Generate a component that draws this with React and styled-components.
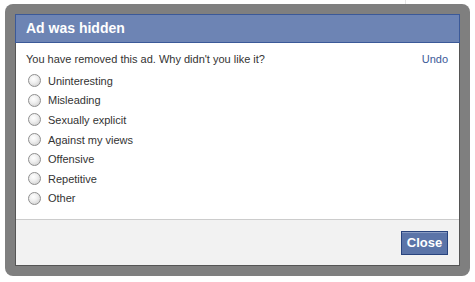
import React from 'react';
import styled, { createGlobalStyle } from 'styled-components';

const GlobalStyle = createGlobalStyle`
  body {
    margin: 0;
    background: #fff linear-gradient(#e5e5e5, #e5e5e5) no-repeat 405px 0 / 1px 100%;
    font-family: "Liberation Sans", Arial, sans-serif;
  }
`;

const Frame = styled.div`
  box-sizing: border-box;
  width: 465px;
  height: 272px;
  margin: 4px 0 0 5px;
  padding: 10px;
  border-radius: 8px;
  background: #7f7f7f;
`;

const Dialog = styled.div`
  box-sizing: border-box;
  height: 100%;
  display: flex;
  flex-direction: column;
  background: #fff;
  border: 1px solid #555;
  border-top: none;
`;

const Header = styled.div`
  height: 27px;
  line-height: 27px;
  padding-left: 10px;
  background: #6d84b4;
  border: 1px solid #3b5998;
  margin: 0 -1px;
  color: #fff;
  font-size: 14px;
  font-weight: bold;
`;

const Body = styled.div`
  flex: 1;
  padding: 9px 10px 0 10px;
  font-size: 11px;
  color: #333;
`;

const Prompt = styled.div`
  display: flex;
  justify-content: space-between;
  line-height: 14px;
  margin-bottom: 5px;
`;

const Undo = styled.a`
  color: #3b5998;
  cursor: pointer;
  margin-right: 1px;
`;

const Option = styled.label`
  display: flex;
  align-items: center;
  height: 19.6px;
  gap: 7px;
  padding-left: 2px;
`;

const Radio = styled.span`
  box-sizing: border-box;
  width: 13px;
  height: 13px;
  border-radius: 50%;
  border: 1px solid #8f8f8f;
  background: radial-gradient(circle at 40% 35%, #fff 0%, #f0f0f0 40%, #c8c8c8 100%);
`;

const Footer = styled.div`
  height: 45px;
  display: flex;
  justify-content: flex-end;
  align-items: center;
  padding-right: 11px;
  background: #f2f2f2;
  border-top: 1px solid #ccc;
`;

const Button = styled.button`
  box-sizing: border-box;
  height: 24px;
  width: 47px;
  padding: 0;
  background: #5b74a8;
  border: 1px solid #29447e;
  box-shadow: inset 0 1px 0 #8a9cc2;
  color: #fff;
  font-family: "Liberation Sans", Arial, sans-serif;
  font-size: 13px;
  font-weight: bold;
`;

const reasons = [
  'Uninteresting',
  'Misleading',
  'Sexually explicit',
  'Against my views',
  'Offensive',
  'Repetitive',
  'Other',
];

export default function App() {
  return (
    <>
      <GlobalStyle />
      <Frame>
        <Dialog>
          <Header>Ad was hidden</Header>
          <Body>
            <Prompt>
              <span>You have removed this ad. Why didn't you like it?</span>
              <Undo>Undo</Undo>
            </Prompt>
            {reasons.map((r) => (
              <Option key={r}>
                <Radio />
                <span>{r}</span>
              </Option>
            ))}
          </Body>
          <Footer>
            <Button>Close</Button>
          </Footer>
        </Dialog>
      </Frame>
    </>
  );
}
